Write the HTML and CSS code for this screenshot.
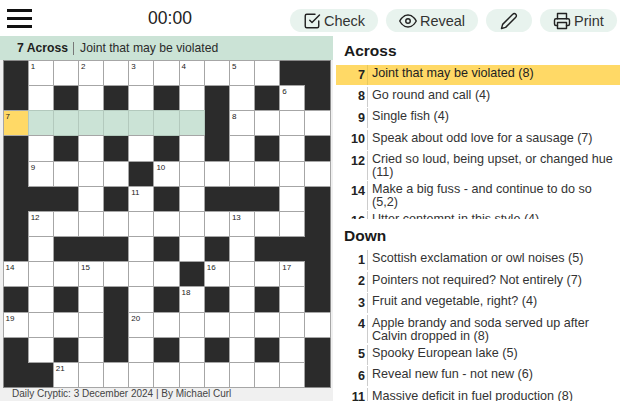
FILE: index.html
```html
<!DOCTYPE html>
<html lang="en">
<head>
<meta charset="utf-8">
<title>Daily Cryptic</title>
<link rel="stylesheet" href="styles.css">
</head>
<body>
<header class="topbar">
  <button class="menu" aria-label="Menu"><span></span><span></span><span></span></button>
  <div class="timer">00:00</div>
  <nav class="tools">
    <button class="tool check"><svg viewBox="0 0 24 24"><path d="M9 11l3 3L22 4"/><path d="M21 12v7a2 2 0 0 1-2 2H5a2 2 0 0 1-2-2V5a2 2 0 0 1 2-2h11"/></svg>Check</button>
    <button class="tool reveal"><svg viewBox="0 0 24 24"><path d="M1 12s4-8 11-8 11 8 11 8-4 8-11 8-11-8-11-8z"/><circle cx="12" cy="12" r="3"/></svg>Reveal</button>
    <button class="tool pencil" aria-label="Pencil"><svg viewBox="0 0 24 24"><path d="M17 3a2.83 2.83 0 1 1 4 4L7.5 20.5 2 22l1.5-5.5L17 3z"/></svg></button>
    <button class="tool print"><svg viewBox="0 0 24 24"><path d="M6 9V2h12v7"/><path d="M6 18H4a2 2 0 0 1-2-2v-5a2 2 0 0 1 2-2h16a2 2 0 0 1 2 2v5a2 2 0 0 1-2 2h-2"/><path d="M6 14h12v8H6z"/></svg>Print</button>
  </nav>
</header>
<main class="layout">
  <section class="board">
    <div class="current"><b>7 Across</b><i></i>Joint that may be violated</div>
    <div class="grid">
      <div class="b"></div><div class="w"><s>1</s></div><div class="w"></div><div class="w"><s>2</s></div><div class="w"></div><div class="w"><s>3</s></div><div class="w"></div><div class="w"><s>4</s></div><div class="w"></div><div class="w"><s>5</s></div><div class="w"></div><div class="b"></div><div class="b"></div>
      <div class="b"></div><div class="w"></div><div class="b"></div><div class="w"></div><div class="b"></div><div class="w"></div><div class="b"></div><div class="w"></div><div class="b"></div><div class="w"></div><div class="b"></div><div class="w"><s>6</s></div><div class="b"></div>
      <div class="w y"><s>7</s></div><div class="w g"></div><div class="w g"></div><div class="w g"></div><div class="w g"></div><div class="w g"></div><div class="w g"></div><div class="w g"></div><div class="b"></div><div class="w"><s>8</s></div><div class="w"></div><div class="w"></div><div class="w"></div>
      <div class="b"></div><div class="w"></div><div class="b"></div><div class="w"></div><div class="b"></div><div class="w"></div><div class="b"></div><div class="w"></div><div class="b"></div><div class="w"></div><div class="b"></div><div class="w"></div><div class="b"></div>
      <div class="b"></div><div class="w"><s>9</s></div><div class="w"></div><div class="w"></div><div class="w"></div><div class="b"></div><div class="w"><s>10</s></div><div class="w"></div><div class="w"></div><div class="w"></div><div class="w"></div><div class="w"></div><div class="w"></div>
      <div class="b"></div><div class="b"></div><div class="b"></div><div class="w"></div><div class="b"></div><div class="w"><s>11</s></div><div class="b"></div><div class="w"></div><div class="b"></div><div class="b"></div><div class="b"></div><div class="w"></div><div class="b"></div>
      <div class="b"></div><div class="w"><s>12</s></div><div class="w"></div><div class="w"></div><div class="w"></div><div class="w"></div><div class="w"></div><div class="w"></div><div class="w"></div><div class="w"><s>13</s></div><div class="w"></div><div class="w"></div><div class="b"></div>
      <div class="b"></div><div class="w"></div><div class="b"></div><div class="b"></div><div class="b"></div><div class="w"></div><div class="b"></div><div class="w"></div><div class="b"></div><div class="w"></div><div class="b"></div><div class="b"></div><div class="b"></div>
      <div class="w"><s>14</s></div><div class="w"></div><div class="w"></div><div class="w"><s>15</s></div><div class="w"></div><div class="w"></div><div class="w"></div><div class="b"></div><div class="w"><s>16</s></div><div class="w"></div><div class="w"></div><div class="w"><s>17</s></div><div class="b"></div>
      <div class="b"></div><div class="w"></div><div class="b"></div><div class="w"></div><div class="b"></div><div class="w"></div><div class="b"></div><div class="w"><s>18</s></div><div class="b"></div><div class="w"></div><div class="b"></div><div class="w"></div><div class="b"></div>
      <div class="w"><s>19</s></div><div class="w"></div><div class="w"></div><div class="w"></div><div class="b"></div><div class="w"><s>20</s></div><div class="w"></div><div class="w"></div><div class="w"></div><div class="w"></div><div class="w"></div><div class="w"></div><div class="w"></div>
      <div class="b"></div><div class="w"></div><div class="b"></div><div class="w"></div><div class="b"></div><div class="w"></div><div class="b"></div><div class="w"></div><div class="b"></div><div class="w"></div><div class="b"></div><div class="w"></div><div class="b"></div>
      <div class="b"></div><div class="b"></div><div class="w"><s>21</s></div><div class="w"></div><div class="w"></div><div class="w"></div><div class="w"></div><div class="w"></div><div class="w"></div><div class="w"></div><div class="w"></div><div class="w"></div><div class="b"></div>
    </div>
    <footer class="credit">Daily Cryptic: 3 December 2024 | By Michael Curl</footer>
  </section>
  <aside class="clues">
    <h2>Across</h2>
    <ol class="list across">
      <li class="active"><b>7</b><span>Joint that may be violated (8)</span></li>
      <li><b>8</b><span>Go round and call (4)</span></li>
      <li><b>9</b><span>Single fish (4)</span></li>
      <li><b>10</b><span>Speak about odd love for a sausage (7)</span></li>
      <li><b>12</b><span>Cried so loud, being upset, or changed hue (11)</span></li>
      <li><b>14</b><span>Make a big fuss - and continue to do so (5,2)</span></li>
      <li><b>16</b><span>Utter contempt in this style (4)</span></li>
    </ol>
    <h2 class="down-title">Down</h2>
    <ol class="list down">
      <li><b>1</b><span>Scottish exclamation or owl noises (5)</span></li>
      <li><b>2</b><span>Pointers not required? Not entirely (7)</span></li>
      <li><b>3</b><span>Fruit and vegetable, right? (4)</span></li>
      <li><b>4</b><span>Apple brandy and soda served up after Calvin dropped in (8)</span></li>
      <li><b>5</b><span>Spooky European lake (5)</span></li>
      <li><b>6</b><span>Reveal new fun - not new (6)</span></li>
      <li><b>11</b><span>Massive deficit in fuel production (8)</span></li>
    </ol>
  </aside>
</main>
</body>
</html>
```
FILE: styles.css
```css
* { box-sizing: border-box; }
html, body { margin: 0; height: 401px; overflow: hidden; background: #fff; }
body { font-family: "Liberation Sans", Arial, sans-serif; color: #222; display: flex; flex-direction: column; }
button { font: inherit; color: inherit; border: 0; margin: 0; }

.topbar { height: 36px; flex: none; display: flex; align-items: center; }
.menu { width: 25px; height: 19px; margin: 0 0 0 7px; padding: 0; background: none; display: flex; flex-direction: column; justify-content: space-between; }
.menu span { display: block; height: 3px; background: #111; }
.timer { width: 44px; margin-left: 116px; font-size: 17.5px; text-align: center; white-space: nowrap; color: #222; }
.tools { display: flex; gap: 8px; margin-left: 98px; padding-top: 5px; }
.tool { height: 23px; border-radius: 12px; background: #e8f3ee; display: flex; align-items: center; justify-content: center; gap: 3px; font-size: 14.5px; color: #333; padding: 0; }
.tool svg { width: 18px; height: 18px; fill: none; stroke: #222; stroke-width: 1.9; stroke-linecap: round; stroke-linejoin: round; }
.check { width: 88px; }
.reveal { width: 92px; }
.reveal svg { width: 18px; height: 18px; }
.pencil { width: 46px; }
.print { width: 77px; }

.layout { flex: 1; display: flex; min-height: 0; }
.board { width: 333px; flex: none; background: #f0f0f0; display: flex; flex-direction: column; }
.current { height: 24px; background: #cbe3d6; padding-left: 17px; font-size: 12.2px; display: flex; align-items: center; color: #2a2a2a; }
.current b { color: #1d1d1d; }
.current i { width: 1px; height: 13px; background: #777; margin: 0 6px 0 5px; }

.grid { width: 328px; height: 328px; margin-left: 2.5px; flex: none; padding: 1px; background: #2b2b2b; display: grid; gap: 1px; grid-template-columns: repeat(13, 1fr); grid-template-rows: repeat(13, 1fr); outline: 1px solid #8a8a8a; outline-offset: -1px; }
.w { background: #fff; box-shadow: 0 0 0 1px #a6a6a6; position: relative; }
.b { background: #2b2b2b; }
.g { background: #cbe3d6; box-shadow: 0 0 0 1px #b3c9bd; }
.y { background: #ffd966; }
.w s { position: absolute; left: 2px; top: 1px; font-size: 8px; line-height: 9px; text-decoration: none; color: #222; }

.credit { height: 13px; padding-left: 12px; font-size: 10px; line-height: 11px; color: #444; white-space: nowrap; }

.clues { flex: 1; min-width: 0; padding-left: 3px; }
.clues h2 { margin: 0; height: 27px; padding: 6px 0 0 8px; font-size: 15.5px; line-height: 18px; color: #1a1a1a; }
.list { list-style: none; margin: 0; padding: 0; overflow: hidden; display: flex; flex-direction: column; gap: 1.5px; }
.across { height: 154px; margin-top: 2px; }
.clues .down-title { height: 31px; padding-top: 8px; }
.list li { flex: none; width: 284px; min-height: 20px; display: flex; font-size: 12.6px; line-height: 13px; color: #333; }
.list b { flex: none; width: 31px; padding: 3.5px 2px 0 0; text-align: right; color: #222; font-size: 12.6px; }
.list span { flex: 1; border-left: 1px solid #ccc; padding: 2px 0 0.5px 4px; }
.list .active { background: #ffd966; }
.list .active span { color: #222; border-left-color: #e8c85a; }
```
